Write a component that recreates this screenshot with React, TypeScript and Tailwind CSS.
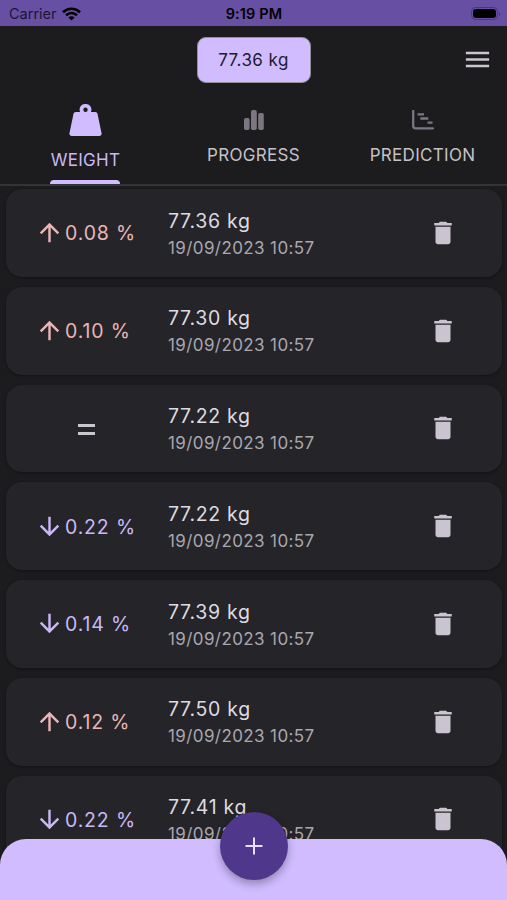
import type { ReactNode } from "react";

type Trend = "up" | "down" | "same";
type Entry = { weight: string; change?: string; trend: Trend };

const DATE = "19/09/2023 10:57";

const entries: Entry[] = [
  { weight: "77.36 kg", change: "0.08 %", trend: "up" },
  { weight: "77.30 kg", change: "0.10 %", trend: "up" },
  { weight: "77.22 kg", trend: "same" },
  { weight: "77.22 kg", change: "0.22 %", trend: "down" },
  { weight: "77.39 kg", change: "0.14 %", trend: "down" },
  { weight: "77.50 kg", change: "0.12 %", trend: "up" },
  { weight: "77.41 kg", change: "0.22 %", trend: "down" },
];

function Icon({ d, className }: { d: string; className: string }) {
  return (
    <svg viewBox="0 0 24 24" fill="currentColor" className={`shrink-0 ${className}`}>
      <path d={d} />
    </svg>
  );
}

const UP = "M4 12l1.41 1.41L11 7.83V20h2V7.83l5.58 5.59L20 12l-8-8-8 8z";
const DOWN = "M20 12l-1.41-1.41L13 16.17V4h-2v12.17l-5.58-5.59L4 12l8 8 8-8z";
const TRASH = "M6 19c0 1.1.9 2 2 2h8c1.1 0 2-.9 2-2V7H6v12zM19 4h-3.5l-1-1h-5l-1 1H5v2h14V4z";
const MENU = "M3 18h18v-2H3v2zm0-5h18v-2H3v2zm0-7v2h18V6H3z";

function StatusBar() {
  return (
    <header className="grid h-[25.5px] shrink-0 grid-cols-3 items-center bg-[#6750a4] pt-0.5 text-black">
      <div className="flex items-center gap-[5px] pl-[9px]">
        <span className="text-[14.5px] leading-5 text-[#1d1433]">Carrier</span>
        <svg viewBox="0 0 19 14" className="h-[14px] w-[19px]" fill="none" stroke="black">
          <path d="M1 5.2C5.8.6 13.2.6 18 5.2" strokeWidth="2.7" />
          <path d="M4 8.3c3.2-3 7.8-3 11 0" strokeWidth="2.6" />
          <path d="M9.500 13.500L6.400 10.400c1.800-1.500 4.400-1.500 6.200 0z" fill="black" stroke="none" />
        </svg>
      </div>
      <span className="pl-px text-center text-[14.5px] leading-5 font-semibold tracking-[0.15px]">9:19 PM</span>
      <div className="flex items-center justify-end pr-[7px]">
        <div className="h-[13px] w-[27px] rounded-[4.5px] border border-[#49377b] p-px">
          <div className="h-full rounded-[3px] bg-black" />
        </div>
        <div className="ml-px h-1 w-[1.5px] rounded-r bg-[#49377b]" />
      </div>
    </header>
  );
}

function Tab({ icon, label, active = false }: { icon: ReactNode; label: string; active?: boolean }) {
  return (
    <div className="flex flex-col items-center">
      <div className="flex h-[52px] items-center">{icon}</div>
      <span
        className={`text-[17px] leading-6 ${
          active ? "mt-[2px] pl-[2px] tracking-[0.3px] text-[#cab8f5]" : "-mt-[3px] tracking-[0.3px] text-[#c4c1c7]"
        }`}
      >
        {label}
      </span>
      {active && <div className="mt-auto ml-px h-1 w-[70px] rounded-t-[4px] bg-[#d0bcff]" />}
    </div>
  );
}

function WeightIcon() {
  return (
    <svg viewBox="0 0 33 32" className="ml-px h-8 w-[33px]" fill="#d0bcff">
      <path
        fillRule="evenodd"
        d="M16.500 0a5.600 5.600 0 0 1 5.400 8h4.300c1.200 0 2 .7 2.300 1.800l4 19.200c.4 1.800-.5 3-2.200 3H2.700C1 32 .1 30.800.500 29L4.500 9.800C4.800 8.700 5.600 8 6.800 8h4.300a5.600 5.600 0 0 1 5.400-8zm0 3.600a2.200 2.200 0 1 0 0 4.400 2.200 2.200 0 0 0 0-4.400z"
      />
    </svg>
  );
}

function BarsIcon() {
  return (
    <svg viewBox="0 0 20 20" className="h-5 w-5" fill="#7b7682">
      <rect x="0" y="8" width="5.600" height="12" rx="1.800" />
      <rect x="7" y="0" width="5.800" height="20" rx="1.800" />
      <rect x="14.200" y="3" width="5.600" height="17" rx="1.800" />
    </svg>
  );
}

function GanttIcon() {
  return (
    <svg viewBox="0 0 22 20" className="h-5 w-[22px]" fill="none" stroke="#7b7682" strokeWidth="2.300">
      <path d="M1.200 0.800v15.200q0 2.300 2.300 2.300H20.900" strokeLinecap="round" />
      <path d="M5.500 4.400h6.500M8.300 8.500h8M15.500 12.600h5" />
    </svg>
  );
}

function Change({ entry }: { entry: Entry }) {
  if (entry.trend === "same") {
    return (
      <div className="flex w-[162px] flex-col gap-[5px] pt-[3px] pl-[71.5px]">
        <div className="h-[3px] w-[17px] bg-[#cac6cd]" />
        <div className="h-[3px] w-[17px] bg-[#cac6cd]" />
      </div>
    );
  }
  const up = entry.trend === "up";
  return (
    <div className={`flex w-[162px] items-center pl-[29px] ${up ? "text-[#e9b6b6]" : "text-[#cab8f5]"}`}>
      <Icon d={up ? UP : DOWN} className="size-[29px]" />
      <span className="ml-px pt-[2px] text-[19.5px] tracking-[0.85px] whitespace-nowrap">{entry.change}</span>
    </div>
  );
}

function EntryCard({ entry }: { entry: Entry }) {
  return (
    <li className="flex h-[87.75px] shrink-0 items-center rounded-2xl bg-[#252429] shadow-[0_1px_3px_rgba(0,0,0,0.35)]">
      <Change entry={entry} />
      <div className="flex flex-1 flex-col pt-[2.5px]">
        <span className="text-[19.5px] leading-[27px] tracking-[0.7px] text-[#dedbe0]">{entry.weight}</span>
        <span className="text-[17px] leading-[26px] tracking-[0.4px] text-[#aaa7af]">{DATE}</span>
      </div>
      <Icon d={TRASH} className="mr-[44px] size-[30px] text-[#cac4d0]" />
    </li>
  );
}

export default function App() {
  return (
    <div className="relative flex h-[900px] w-[507px] flex-col overflow-hidden bg-[#1c1b1e] font-['Inter','Liberation_Sans',sans-serif]">
      <StatusBar />
      <div className="grid h-[68.5px] shrink-0 grid-cols-[1fr_auto_1fr] items-center">
        <button className="col-start-2 h-[46px] w-[114px] rounded-[9px] border border-[#938f99] bg-[#d0bcff] pt-[2px] text-[17px] tracking-[0.45px] text-[#211b2e]">
          77.36 kg
        </button>
        <Icon d={MENU} className="mr-[14px] size-[31px] justify-self-end text-[#cac6cd]" />
      </div>
      <nav className="grid h-[92px] shrink-0 grid-cols-3 border-b-[2px] border-[#343337]">
        <Tab active label="WEIGHT" icon={<WeightIcon />} />
        <Tab label="PROGRESS" icon={<BarsIcon />} />
        <Tab label="PREDICTION" icon={<GanttIcon />} />
      </nav>
      <ul className="flex min-h-0 flex-1 flex-col gap-[10px] overflow-hidden pt-[3px] pr-[5px] pl-[6px]">
        {entries.map((entry, i) => (
          <EntryCard key={i} entry={entry} />
        ))}
      </ul>
      <footer className="absolute inset-x-0 bottom-0 flex h-[61px] justify-center rounded-t-[26px] bg-[#d0bcff]">
        <button className="-mt-[27px] flex size-[68px] items-center justify-center rounded-full bg-[#4f378b] text-[#eaddff] shadow-[0_4px_8px_rgba(0,0,0,0.3)]">
          <svg viewBox="0 0 18 18" className="size-[18px]" stroke="currentColor" strokeWidth="2">
            <path d="M9 0.500v17M0.500 9h17" />
          </svg>
        </button>
      </footer>
    </div>
  );
}
